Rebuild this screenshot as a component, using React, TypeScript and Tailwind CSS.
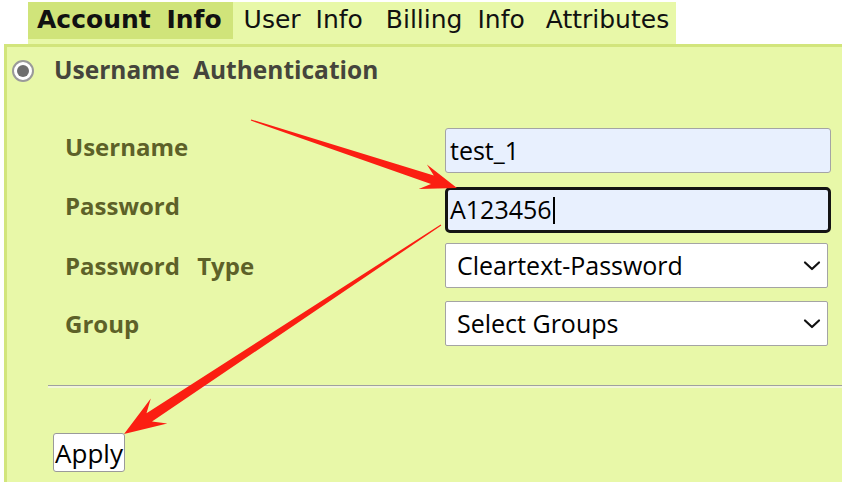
import React from "react";

type Pt = [number, number];

function arrowPoints(tail: Pt, tip: Pt, headLen: number, headHalf: number, shaftW: number): string {
  const dx = tip[0] - tail[0];
  const dy = tip[1] - tail[1];
  const len = Math.hypot(dx, dy);
  const ux = dx / len;
  const uy = dy / len;
  const nx = -uy;
  const ny = ux;
  const at = (d: number, off: number): string =>
    `${(tip[0] - ux * d + nx * off).toFixed(1)},${(tip[1] - uy * d + ny * off).toFixed(1)}`;
  const notch = headLen * 0.72;
  const pts = [
    `${(tail[0] + nx * 0.6).toFixed(1)},${(tail[1] + ny * 0.6).toFixed(1)}`,
    at(notch, shaftW / 2),
    at(headLen, headHalf),
    at(0, 0),
    at(headLen, -headHalf),
    at(notch, -shaftW / 2),
    `${(tail[0] - nx * 0.6).toFixed(1)},${(tail[1] - ny * 0.6).toFixed(1)}`,
  ];
  return pts.join(" ");
}

function Chevron() {
  return (
    <svg width="18" height="12" viewBox="0 0 18 12" className="shrink-0">
      <path d="M2 2.5 L9 9 L16 2.5" fill="none" stroke="#111" strokeWidth="2.2" strokeLinecap="round" strokeLinejoin="round" />
    </svg>
  );
}

export default function App() {
  const label = "font-['Open_Sans','Noto_Sans',sans-serif] font-bold text-[24px] text-[#5d6128] [word-spacing:11px]";
  const field = "font-['Open_Sans','Noto_Sans',sans-serif] text-[25px] text-black";
  return (
    <div className="relative w-[842px] h-[482px] overflow-hidden bg-white">
      {/* tab strip */}
      <div className="pl-[28px] pt-[2px]">
        <div className="flex items-start w-[648px] h-[42px] bg-[#e8f8a8] font-['DejaVu_Sans',sans-serif] text-[25px] text-[#111] [word-spacing:7px]">
          <div className="h-[37px] flex items-center pl-[9px] pr-[11px] bg-[#d0e47a] font-bold leading-none pb-[2px]">Account Info</div>
          <div className="h-[37px] flex items-center pl-[11px] leading-none pb-[2px]">User Info</div>
          <div className="h-[37px] flex items-center pl-[23px] leading-none pb-[2px]">Billing Info</div>
          <div className="h-[37px] flex items-center pl-[21px] leading-none pb-[2px]">Attributes</div>
        </div>
      </div>

      {/* panel */}
      <div className="ml-[4px] h-[440px] border-t-[3px] border-l-[3px] border-[#d2e57c] bg-[#e8f8a8]">
        <div className="flex items-center pt-[9px] pl-[5px] gap-[20px]">
          <div className="w-[22px] h-[22px] rounded-full bg-white border-[2px] border-[#9a9a9a] flex items-center justify-center">
            <div className="w-[12px] h-[12px] rounded-full bg-[#6e6e6e]" />
          </div>
          <div className="font-['Open_Sans','Noto_Sans',sans-serif] font-bold text-[24.5px] leading-[30px] text-[#45453c] [word-spacing:7px] -mt-[1px]">
            Username Authentication
          </div>
        </div>

        <div className="mt-[43px] flex flex-col">
          <div className="flex items-center">
            <div className={`w-[438px] pl-[58px] mb-[8px] ${label}`}>Username</div>
            <div className={`w-[386px] h-[45px] flex items-center px-[4px] bg-[#e8f0fe] border border-[#a4a4a4] rounded-[3px] ${field}`}>
              test_1
            </div>
          </div>
          <div className="flex items-center mt-[14px]">
            <div className={`w-[438px] pl-[58px] mb-[8px] ${label}`}>Password</div>
            <div className={`w-[386px] h-[46px] flex items-center px-[2px] bg-[#e8f0fe] border-[3px] border-[#141414] rounded-[5px] ${field}`}>
              <span>A123456</span>
              <span className="inline-block w-[2px] h-[27px] bg-black ml-[1px]" />
            </div>
          </div>
          <div className="flex items-center mt-[10px]">
            <div className={`w-[438px] pl-[58px] ${label}`}>Password Type</div>
            <div className={`w-[383px] h-[45px] flex items-center justify-between pl-[11px] pr-[6px] bg-white border border-[#a4a4a4] rounded-[2px] ${field}`}>
              <span>Cleartext-Password</span>
              <Chevron />
            </div>
          </div>
          <div className="flex items-center mt-[13px]">
            <div className={`w-[438px] pl-[58px] ${label}`}>Group</div>
            <div className={`w-[383px] h-[45px] flex items-center justify-between pl-[11px] pr-[6px] bg-white border border-[#a4a4a4] rounded-[2px] ${field}`}>
              <span>Select Groups</span>
              <Chevron />
            </div>
          </div>
        </div>

        <div className="mt-[39px] ml-[41px] h-[3px] border-t border-[#a0a0a0] bg-[#f1f6d8]" />

        <div className="mt-[45px] ml-[46px]">
          <div className="inline-flex items-center justify-center w-[72px] h-[39px] bg-white border border-[#9a9a9a] rounded-[3px] font-['Open_Sans','Noto_Sans',sans-serif] text-[26px] text-black leading-none">
            Apply
          </div>
        </div>
      </div>

      {/* annotation arrows */}
      <svg className="absolute inset-0 pointer-events-none" width="842" height="482" viewBox="0 0 842 482">
        <polygon points={arrowPoints([251, 120], [457, 188], 36, 13, 9)} fill="#fb1e12" />
        <polygon points={arrowPoints([441, 225], [124, 434], 42, 15, 10)} fill="#fb1e12" />
      </svg>
    </div>
  );
}
